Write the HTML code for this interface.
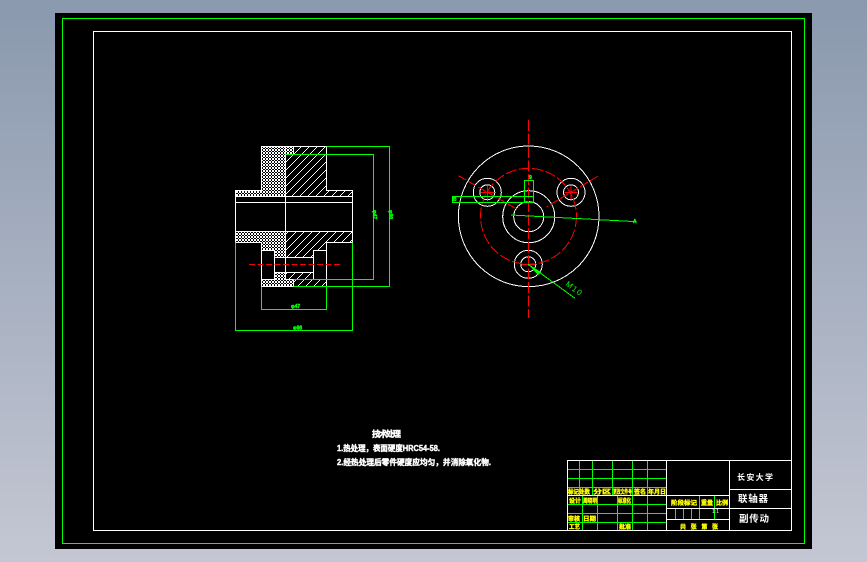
<!DOCTYPE html>
<html><head><meta charset="utf-8"><style>
html,body{margin:0;padding:0;width:867px;height:562px;overflow:hidden;background:linear-gradient(#8a99ae,#c4c7d3)}
svg{position:absolute;left:0;top:0;display:block}
text{font-family:"Liberation Sans","Noto Sans CJK SC",sans-serif}
.y{fill:#ff0;stroke:#ff0;stroke-width:.35;font-size:6px;font-weight:700}
.w{fill:#fff;stroke:#fff;stroke-width:.4;font-weight:700}
.g{fill:#0f0;stroke:#0f0;stroke-width:.4;font-weight:700;font-size:5px}
</style></head><body>
<svg width="867" height="562" viewBox="0 0 867 562" xmlns="http://www.w3.org/2000/svg" shape-rendering="crispEdges">
<defs>
<pattern id="c" width="3" height="3" patternUnits="userSpaceOnUse"><rect width="3" height="3" fill="#000"/><path d="M0 0h1v1h-1zM2 0h1v1h-1zM1 1h1v1h-1zM0 2h1v1h-1zM2 2h1v1h-1z" fill="#fff"/></pattern>
<pattern id="d" width="8" height="8" patternUnits="userSpaceOnUse"><rect width="8" height="8" fill="#000"/><path d="M7 0h1v1h-1zM6 1h1v1h-1zM5 2h1v1h-1zM4 3h1v1h-1zM3 4h1v1h-1zM2 5h1v1h-1zM1 6h1v1h-1zM0 7h1v1h-1z" fill="#fff"/></pattern>
</defs>
<rect x="55" y="13" width="757" height="536" fill="#000"/>
<g fill="none">
<rect x="62.5" y="18.5" width="742" height="525" stroke="#0f0"/>
<rect x="93.5" y="31.5" width="698" height="499" stroke="#fff"/>
</g>

<!-- section view -->
<g stroke="#fff" stroke-width="1">
<path fill="url(#c)" d="M261.5 146.5H293.5V154.5H285.5V196.5H235.5V190.5H261.5Z"/>
<path fill="url(#d)" d="M293.5 146.5H326.5V190.5H352.5V196.5H285.5V154.5H293.5Z"/>
<path fill="url(#c)" d="M235.5 231.5H285.5V257.5H274.5V250.5H261.5V242.5H235.5Z"/>
<path fill="url(#d)" d="M285.5 231.5H352.5V242.5H326.5V250.5H313.5V257.5H285.5Z"/>
<path fill="url(#c)" d="M274.5 272.5H285.5V279.5H293.5V286.5H261.5V279.5H274.5Z"/>
<path fill="url(#d)" d="M285.5 272.5H313.5V279.5H326.5V286.5H293.5V279.5H285.5Z"/>
<path fill="none" d="M235.5 196.5V231.5M352.5 196.5V231.5M235.5 202.5H352.5M285.5 146.5V279.5M261.5 250.5V279.5M274.5 250.5V279.5M313.5 250.5V279.5M326.5 242.5V286.5"/>
</g>
<path d="M249 264.5H340" stroke="#f00" stroke-dasharray="6 2.5"/>
<g fill="none" stroke="#0f0">
<path d="M326.5 146.5H389.5V286.5H293.5M285.5 154.5H373.5V279.5H293.5"/>
<path d="M261.5 286.5V309.5H326.5V286.5M235.5 242.5V330.5H352.5V242.5"/>
</g>
<text class="g" x="291" y="308">φ47</text><text class="g" x="293" y="329.5">φ98</text>
<text class="g" transform="translate(373 210) rotate(90)">φ47</text><text class="g" transform="translate(389 210) rotate(90)">φ98</text>

<!-- front view -->
<g fill="none" stroke="#fff">
<circle cx="528.7" cy="216.3" r="70.3"/><circle cx="528.7" cy="216.7" r="26"/><circle cx="528.7" cy="216.7" r="15"/>
<circle cx="528.3" cy="264.3" r="14"/><circle cx="528.3" cy="264.3" r="7.5"/>
<circle cx="487.3" cy="192.3" r="14"/><circle cx="487.3" cy="192.3" r="7.5"/>
<circle cx="571" cy="192.3" r="14"/><circle cx="571" cy="192.3" r="7.5"/>
</g>
<g fill="none" stroke="#f00">
<circle cx="528.5" cy="216.3" r="48" stroke-dasharray="11 2.5"/>
<path d="M528.5 120V318" stroke-dasharray="11 2.5"/>
<path d="M458.3 175.7L516.7 209M597.7 176.3L546.7 206.7" stroke-dasharray="9 2.5"/>
<path d="M481 192.5H494M487.5 186V199M564.5 192.5H577.5M571 186V199M522 264.5H535"/>
</g>
<g fill="none" stroke="#0f0">
<path d="M524.5 202.5V180.5H533.5V202.5M533.5 196.5H452.5V202.5H533.5"/>
<path d="M511 215L636.7 221.7"/>
<path d="M528.3 264.3L575 298.3"/>
</g>
<path d="M528 264L541 272L538 275Z" fill="#0f0"/>
<text transform="translate(565 285) rotate(37)" fill="#0f0" font-size="8" textLength="18">M10</text>
<text class="g" x="529" y="179">9</text>
<text class="g" x="453" y="201">B</text>
<text class="g" x="633" y="223">A</text>

<!-- notes -->
<text class="w" x="372" y="437" font-size="8.5" textLength="29">技术处理</text>
<text class="w" x="337" y="451" font-size="8" textLength="103" lengthAdjust="spacingAndGlyphs">1.热处理，表面硬度HRC54-58.</text>
<text class="w" x="337" y="465" font-size="8" textLength="154" lengthAdjust="spacingAndGlyphs">2.经热处理后零件硬度应均匀，并消除氧化物.</text>

<!-- title block -->
<g fill="none">
<path stroke="#0f0" d="M567 469.5H666M567 478.5H666M567 487.5H666M567 504.5H666M567 513.5H666M567 522.5H666
M579.5 460V495M592.5 460V495M612.5 460V495M632.5 460V495M647.5 460V495
M582.5 495V530M597.5 495V530M617.5 495V530M632.5 495V530M647.5 495V530
M699.5 495V519M714.5 495V519M675.5 508V519M683.5 508V519M691.5 508V519"/>
<rect x="567.5" y="460.5" width="224" height="70" stroke="#fff"/>
<path stroke="#fff" d="M666.5 460V530M729.5 460V530M567 495.5H729M666 508.5H791M666 519.5H729M729 489.5H791"/>
</g>
<text class="y" x="568" y="494" textLength="22" lengthAdjust="spacingAndGlyphs">标记处数</text>
<text class="y" x="593" y="494" textLength="18" lengthAdjust="spacingAndGlyphs">分区</text>
<text class="y" x="613" y="494" textLength="19" lengthAdjust="spacingAndGlyphs">更改文件号</text>
<text class="y" x="634" y="494" textLength="12" lengthAdjust="spacingAndGlyphs">签名</text>
<text class="y" x="648" y="494" textLength="18" lengthAdjust="spacingAndGlyphs">年月日</text>
<text class="y" x="569" y="503" textLength="12" lengthAdjust="spacingAndGlyphs">设计</text>
<text class="y" x="583" y="503" textLength="14" lengthAdjust="spacingAndGlyphs">周晓明</text>
<text class="y" x="618" y="503" textLength="13" lengthAdjust="spacingAndGlyphs">标准化</text>
<text class="y" x="568" y="521" textLength="12" lengthAdjust="spacingAndGlyphs">审核</text>
<text class="y" x="583" y="521" textLength="13" lengthAdjust="spacingAndGlyphs">日期</text>
<text class="y" x="569" y="529" textLength="11" lengthAdjust="spacingAndGlyphs">工艺</text>
<text class="y" x="619" y="529" textLength="12" lengthAdjust="spacingAndGlyphs">批准</text>
<text class="y" x="671" y="505" textLength="26" lengthAdjust="spacingAndGlyphs">阶段标记</text>
<text class="y" x="701" y="505" textLength="12" lengthAdjust="spacingAndGlyphs">重量</text>
<text class="y" x="716" y="505" textLength="12" lengthAdjust="spacingAndGlyphs">比例</text>
<text class="y" x="680" y="529" textLength="38" lengthAdjust="spacing">共 张 第 张</text>
<text x="712" y="513" fill="#fff" font-size="5">1:1</text>
<g fill="#fff" font-weight="700">
<text x="737" y="480" font-size="8" textLength="36">长安大学</text>
<text x="738" y="502" font-size="9.5" textLength="30">联轴器</text>
<text x="739" y="522" font-size="9.5" textLength="30">副传动</text>
</g>
</svg>
</body></html>
